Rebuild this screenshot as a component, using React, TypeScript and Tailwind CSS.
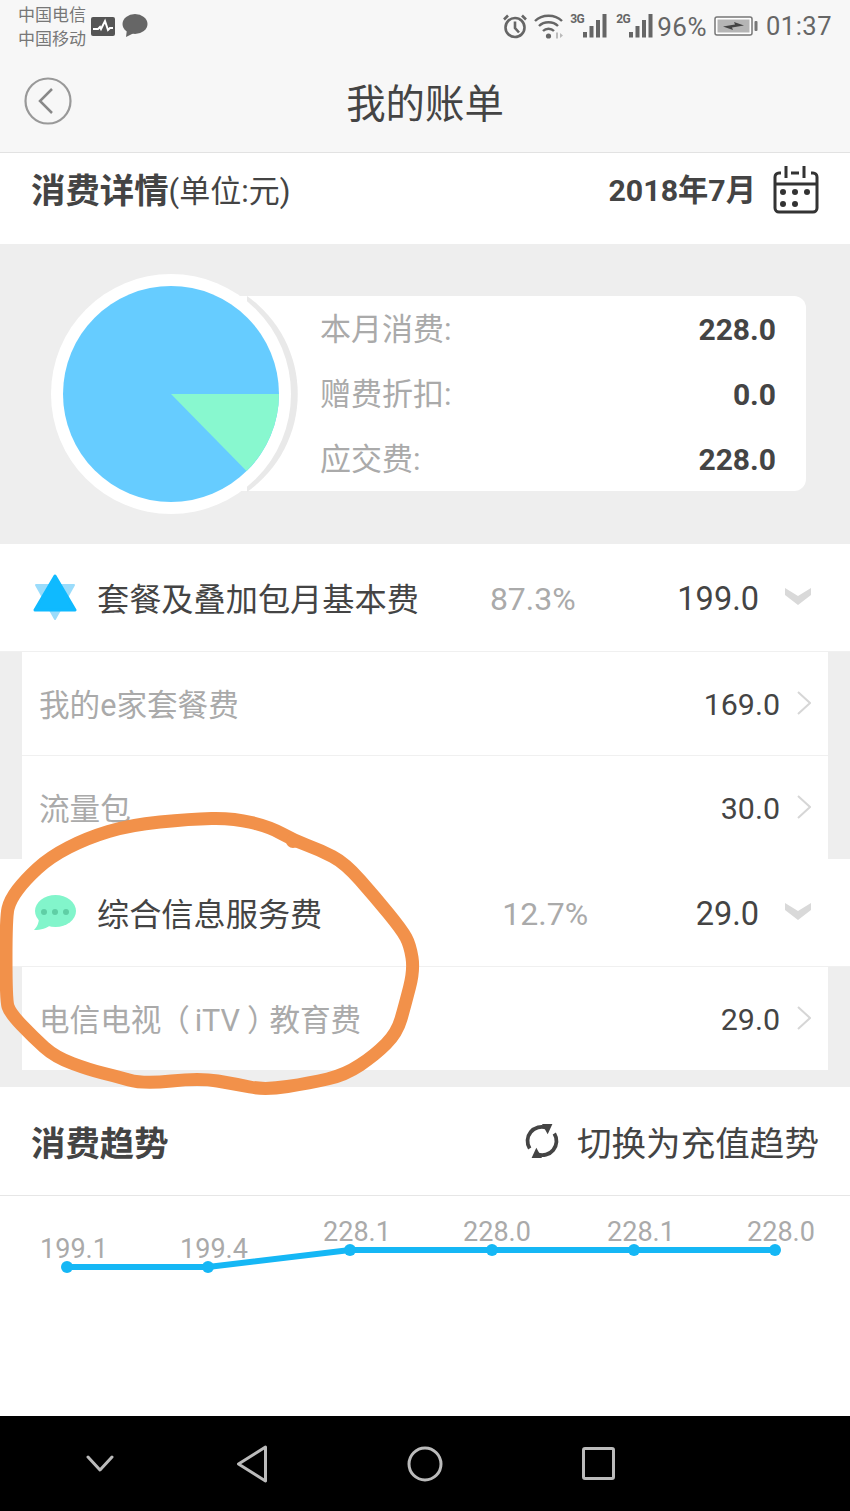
import type { ReactNode } from "react";

const FONT = "font-['Roboto','Noto_Sans_CJK_SC',sans-serif]";

function StatusBar() {
  return (
    <div className="h-[52px] flex items-center justify-between pl-[18px] pr-[18px] text-[#666]">
      <div className="flex items-center">
        <div className="text-[17px] leading-[24px] w-[70px] text-[#777] mt-[1px]">
          <div className="whitespace-nowrap">中国电信</div>
          <div className="whitespace-nowrap">中国移动</div>
        </div>
        <svg width="26" height="20" viewBox="0 0 26 20" className="ml-[2px]">
          <rect x="1" y="1" width="24" height="19" rx="2" fill="#555" />
          <path d="M3 13h5l2-2 1 2 4-8 3 9 2-2h3" fill="none" stroke="#fff" strokeWidth="2" />
        </svg>
        <svg width="26" height="24" viewBox="0 0 26 24" className="ml-[6px]">
          <ellipse cx="13" cy="10" rx="12.5" ry="10" fill="#666" />
          <path d="M5 15 L4 23 L12 19Z" fill="#666" />
        </svg>
      </div>
      <div className="flex items-center">
        <svg width="24" height="26" viewBox="0 0 24 26" fill="none" stroke="#666" strokeWidth="2.600">
          <circle cx="12" cy="14.500" r="9.500" />
          <path d="M12 8.500v6.500l4 4.500M1 6.500 5 2.500M23 6.500 19 2.500" />
        </svg>
        <svg width="29" height="26" viewBox="0 0 29 26" fill="none" stroke="#666" strokeWidth="2.400" className="ml-[7px]">
          <path d="M1 8c7-7 20-7 27 0M5 13c5-5 14-5 19 0M9 18c3-3 8-3 11 0" />
          <circle cx="14.500" cy="23" r="2.600" fill="#666" stroke="none" />
          <path d="M22 19.500h2v6h-2zM26 20l3 2.500-3 2.500z" fill="#bbb" stroke="none" />
        </svg>
        <Signal label="3G" className="ml-[7px]" />
        <Signal label="2G" className="ml-[9px]" />
        <span className="text-[26px] leading-none ml-[4px] mt-[1px] tracking-[0.5px] text-[#666]">96%</span>
        <svg width="44" height="22" viewBox="0 0 44 22" className="ml-[7px]">
          <rect x="1" y="2" width="37" height="18" rx="2" fill="#fff" stroke="#777" strokeWidth="1.500" />
          <rect x="3.500" y="4.500" width="32" height="13" fill="#b5b5b5" />
          <path d="M9 11.500 L21 9.500 L20 7 L30 10.500 L18 12.500 L19 15Z" fill="#444" />
          <rect x="40.500" y="6" width="3" height="10" rx="1" fill="#777" />
        </svg>
        <span className="text-[25.5px] leading-none ml-[8px] mt-[1px] tracking-[0.5px] text-[#666]">01:37</span>
      </div>
    </div>
  );
}

function Signal({ label, className }: { label: string; className: string }) {
  return (
    <div className={`relative w-[37px] h-[24px] ${className}`}>
      <span className="absolute left-0 top-[-1px] text-[12px] font-bold leading-[13px] tracking-[-0.5px] text-[#666]">{label}</span>
      <svg width="37" height="24" viewBox="0 0 37 24" fill="#666">
        <rect x="13" y="18" width="4" height="5.500" />
        <rect x="19.500" y="12" width="4" height="11.500" />
        <rect x="26" y="6" width="4" height="17.500" />
        <rect x="32.500" y="0" width="4" height="23.500" />
      </svg>
    </div>
  );
}

function Chevron() {
  return (
    <svg width="26" height="17" viewBox="0 0 26 17" fill="#d9d9d9" className="ml-[26px] mt-[-3px]">
      <path d="M0 0 L13 8 L26 0 V7 L13 17 L0 7Z" />
    </svg>
  );
}

function ArrowRight() {
  return (
    <svg width="14" height="24" viewBox="0 0 14 24" fill="none" stroke="#d6d6d6" strokeWidth="2" className="ml-[17px] mt-[-2px]">
      <path d="M1 1 L13 12 L1 23" />
    </svg>
  );
}

function MainRow({ icon, name, pct, amount, pctClass }: { icon: ReactNode; name: string; pct: string; amount: string; pctClass: string }) {
  return (
    <div className="h-[108px] bg-white flex items-center pl-[32px] pr-[39px] border-b border-[#f0f0f0]">
      <div className="w-[46px] flex justify-center">{icon}</div>
      <span className="ml-[19px] mt-[5px] text-[#444] text-[32.2px] leading-none whitespace-nowrap">{name}</span>
      <span className={`mt-[3px] text-[32px] leading-none text-[#aaa] ${pctClass}`}>{pct}</span>
      <span className="ml-auto mt-[3px] text-[32.5px] leading-none text-[#444]">{amount}</span>
      <Chevron />
    </div>
  );
}

function SubRow({ name, amount, h, border }: { name: ReactNode; amount: string; h: string; border: boolean }) {
  return (
    <div className={`${h} bg-white mx-[22px] flex items-center pl-[17px] pr-[17px] ${border ? "border-b border-[#f0f0f0]" : ""}`}>
      <span className="mt-[5px] text-[30.6px] leading-none text-[#aaa] whitespace-nowrap">{name}</span>
      <span className="ml-auto mt-[4px] text-[30.4px] leading-none text-[#444]">{amount}</span>
      <ArrowRight />
    </div>
  );
}

function SummaryLine({ label, value }: { label: string; value: string }) {
  return (
    <div className="flex items-center justify-between h-[65px]">
      <span className="mt-[2px] text-[31px] leading-none text-[#aaa]">{label}</span>
      <span className="mt-[2px] text-[30px] leading-none font-bold text-[#444]">{value}</span>
    </div>
  );
}

function Pie() {
  return (
    <svg width="250" height="242" viewBox="0 0 250 242" className="absolute left-[50px] top-[29px]">
      <path d="M197 23 A120 120 0 0 1 197 219 Z" fill="#e9e9e9" />
      <circle cx="121" cy="121" r="120" fill="#fff" />
      <circle cx="121" cy="121" r="108" fill="#66ccff" />
      <path d="M121 121 H229 A108 108 0 0 1 196.500 198 Z" fill="#88f8cf" />
    </svg>
  );
}

function Chart() {
  const xs = [67, 208, 350, 492, 634, 775];
  const ys = [1267, 1267, 1250, 1250, 1250, 1250].map((y) => y - 1196);
  const labels = ["199.1", "199.4", "228.1", "228.0", "228.1", "228.0"];
  const labelX = [74, 214, 357, 497, 641, 781];
  return (
    <svg width="850" height="220" viewBox="0 0 850 220" className="block">
      <polyline points={xs.map((x, i) => `${x},${ys[i]}`).join(" ")} fill="none" stroke="#15b7f5" strokeWidth="6" />
      {xs.map((x, i) => (
        <circle key={x} cx={x} cy={ys[i]} r="6" fill="#15b7f5" />
      ))}
      {labels.map((t, i) => (
        <text key={i} x={labelX[i]} y={ys[i] - 9} textAnchor="middle" fontSize="27" fill="#aaa">
          {t}
        </text>
      ))}
    </svg>
  );
}

const SCRIBBLE: [number, number][] = [
  [233, 818], [190, 819], [130, 825], [87, 838], [50, 857], [25, 880], [10, 900], [6, 917], [6, 1000], [10, 1013],
  [33, 1037], [55, 1057], [90, 1070], [115, 1076], [143, 1084], [200, 1078], [235, 1084], [265, 1090], [310, 1083], [345, 1075],
  [375, 1055], [397, 1033], [405, 1005], [414, 970], [410, 945], [402, 930], [375, 897], [345, 863], [320, 850], [293, 840],
  [270, 827],
];

function scribblePath() {
  const n = SCRIBBLE.length;
  const mid = (a: [number, number], b: [number, number]) => `${(a[0] + b[0]) / 2} ${(a[1] + b[1]) / 2}`;
  let d = `M${mid(SCRIBBLE[n - 1], SCRIBBLE[0])}`;
  for (let i = 0; i < n; i++) {
    const p = SCRIBBLE[i];
    d += ` Q${p[0]} ${p[1]} ${mid(p, SCRIBBLE[(i + 1) % n])}`;
  }
  return d + "Z";
}

function Scribble() {
  return (
    <svg width="850" height="1511" viewBox="0 0 850 1511" className="absolute left-0 top-0 pointer-events-none" fill="none">
      <path d={scribblePath()} stroke="#f2914a" strokeWidth="13" strokeLinecap="round" strokeLinejoin="round" />
      <circle cx="293" cy="841" r="7" fill="#f2914a" />
    </svg>
  );
}

export default function App() {
  return (
    <div className={`relative w-[850px] h-[1511px] overflow-hidden bg-white flex flex-col ${FONT}`}>
      <div className="h-[153px] bg-[#f7f7f7] border-b border-[#e2e2e2] shrink-0">
        <StatusBar />
        <div className="relative h-[96px] flex items-center justify-center">
          <svg width="48" height="48" viewBox="0 0 48 48" fill="none" stroke="#999" strokeWidth="2.200" className="absolute left-[24px] top-[25px]">
            <circle cx="24" cy="24" r="22.500" />
            <path d="M28 12 L16 24 L28 36" strokeWidth="2.500" stroke="#888" />
          </svg>
          <span className="text-[39.4px] leading-none text-[#444] mt-[10px]">我的账单</span>
        </div>
      </div>

      <div className="h-[91px] bg-white flex items-center pl-[31px] pr-[31px] shrink-0">
        <span className="text-[34.4px] leading-none font-bold text-[#444] mt-[-15px]">消费详情</span>
        <span className="text-[31px] leading-none text-[#444] mt-[-15px]">(单位:元)</span>
        <span className="ml-auto text-[30.3px] leading-none font-bold text-[#444] mt-[-15px]">2018年7月</span>
        <svg width="46" height="48" viewBox="0 0 46 48" fill="none" stroke="#333" strokeWidth="3" className="ml-[17px] mt-[-18px]">
          <path d="M8 7H6a4 4 0 0 0-4 4v31a4 4 0 0 0 4 4h34a4 4 0 0 0 4-4V11a4 4 0 0 0-4-4h-2M18 7h8M13 0v12M31 0v12M2 18h42" />
          <g fill="#333" stroke="none">
            <circle cx="10" cy="26" r="3" />
            <circle cx="22" cy="26" r="3" />
            <circle cx="34" cy="26" r="3" />
            <circle cx="10" cy="38" r="3" />
            <circle cx="22" cy="38" r="3" />
          </g>
        </svg>
      </div>

      <div className="relative h-[300px] bg-[#eeeeee] pt-[52px] shrink-0">
        <div className="ml-[170px] mr-[44px] h-[195px] bg-white rounded-r-[12px] pl-[150px] pr-[30px] flex flex-col">
          <SummaryLine label="本月消费:" value="228.0" />
          <SummaryLine label="赠费折扣:" value="0.0" />
          <SummaryLine label="应交费:" value="228.0" />
        </div>
        <Pie />
      </div>

      <div className="bg-[#eeeeee] shrink-0">
        <MainRow
          name="套餐及叠加包月基本费"
          pct="87.3%"
          amount="199.0"
          pctClass="ml-[71px]"
          icon={
            <svg width="44" height="48" viewBox="0 0 44 48">
              <path d="M22 45 L3 11 H41Z" fill="#9bdcfb" stroke="#9bdcfb" strokeWidth="2" strokeLinejoin="round" />
              <path d="M22 2 L42 36 H2Z" fill="#0fbaff" stroke="#0fbaff" strokeWidth="3" strokeLinejoin="round" />
            </svg>
          }
        />
        <SubRow h="h-[104px]" name="我的e家套餐费" amount="169.0" border />
        <SubRow h="h-[103px]" name="流量包" amount="30.0" border={false} />
        <MainRow
          name="综合信息服务费"
          pct="12.7%"
          amount="29.0"
          pctClass="ml-[180px]"
          icon={
            <svg width="44" height="36" viewBox="0 0 44 36">
              <ellipse cx="22.500" cy="16" rx="20.500" ry="16" fill="#82f5cb" />
              <path d="M6 22 C6 28 4 32 1 35 C8 35 14 33 18 30Z" fill="#82f5cb" />
              <circle cx="11" cy="17" r="3" fill="#5fcfa5" />
              <circle cx="22" cy="17" r="3" fill="#5fcfa5" />
              <circle cx="33" cy="17" r="3" fill="#5fcfa5" />
            </svg>
          }
        />
        <SubRow
          h="h-[103px]"
          name={
            <>
              电信电视
              <span className="ml-[12px] [font-feature-settings:'palt']">（</span>
              <span className="ml-[6px]">iTV</span>
              <span className="ml-[8px] [font-feature-settings:'palt']">）</span>
              <span className="ml-[6px]">教育费</span>
            </>
          }
          amount="29.0"
          border={false}
        />
        <div className="h-[17px]" />
      </div>

      <div className="h-[109px] bg-white border-b border-[#e6e6e6] flex items-center pl-[31px] pr-[31px] shrink-0">
        <span className="mt-[6px] text-[34.4px] leading-none font-bold text-[#444]">消费趋势</span>
        <svg width="36" height="38" viewBox="0 0 38 38" fill="none" stroke="#444" strokeWidth="4" className="ml-auto">
          <path d="M6 27A15 15 0 0 1 24 5M32 11A15 15 0 0 1 14 33" />
          <path d="M19 1l11 0-5 11zM19 37l-11 0 5-11z" fill="#444" stroke="none" />
        </svg>
        <span className="ml-[17px] mt-[6px] text-[34.6px] leading-none text-[#444] whitespace-nowrap">切换为充值趋势</span>
      </div>

      <div className="flex-1 bg-white">
        <Chart />
      </div>

      <div className="h-[95px] bg-black shrink-0 flex items-center">
        <div className="w-[165px] flex pl-[86px]">
          <svg width="28" height="17" viewBox="0 0 28 17" fill="none" stroke="#bbb" strokeWidth="3" strokeLinejoin="round" strokeLinecap="round">
            <path d="M2 2 L14 15 L26 2" />
          </svg>
        </div>
        <div className="w-[174px] flex justify-center">
          <svg width="32" height="38" viewBox="0 0 32 38" fill="none" stroke="#bbb" strokeWidth="3" strokeLinejoin="round">
            <path d="M29.500 2 L2.500 19 L29.500 36Z" />
          </svg>
        </div>
        <div className="w-[172px] flex justify-center">
          <svg width="36" height="36" viewBox="0 0 36 36" fill="none" stroke="#bbb" strokeWidth="3">
            <circle cx="18" cy="18" r="16" />
          </svg>
        </div>
        <div className="w-[174px] flex justify-center">
          <svg width="33" height="33" viewBox="0 0 33 33" fill="none" stroke="#bbb" strokeWidth="3">
            <rect x="1.500" y="1.500" width="30" height="30" rx="1.500" />
          </svg>
        </div>
      </div>
      <Scribble />
    </div>
  );
}
